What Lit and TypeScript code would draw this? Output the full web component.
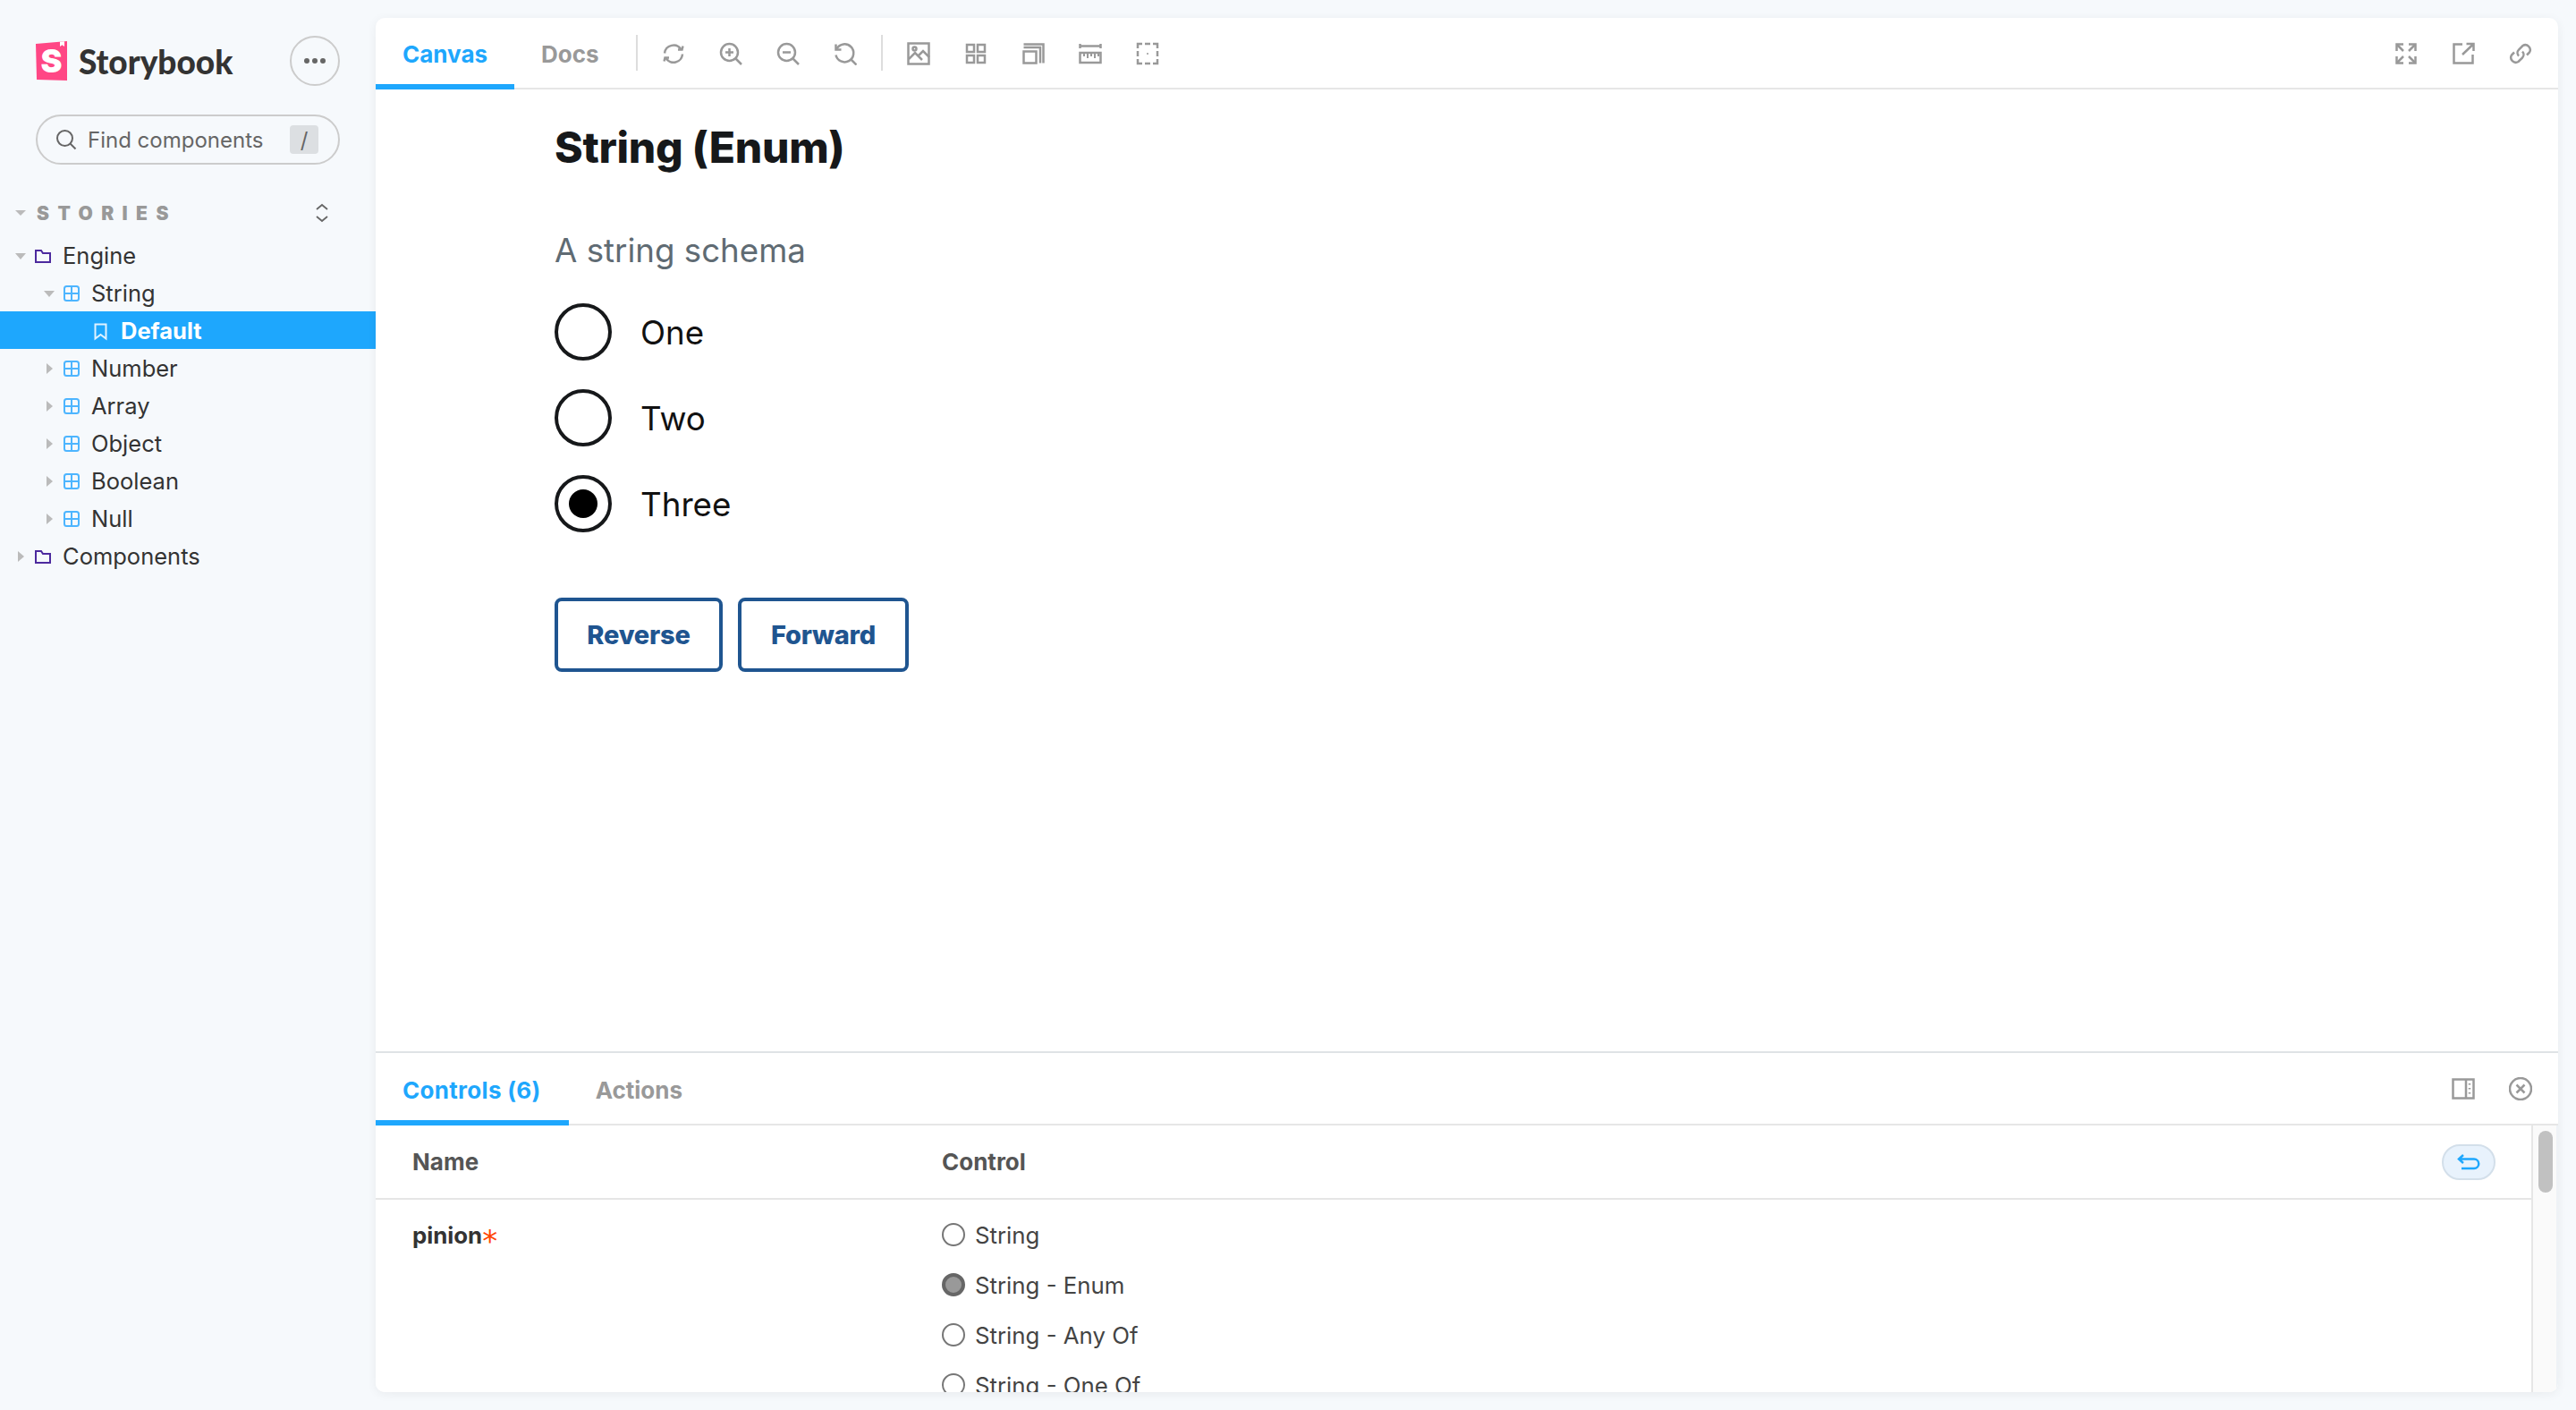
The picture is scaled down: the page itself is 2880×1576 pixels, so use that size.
import { LitElement, html, css, svg } from 'lit';
import { customElement } from 'lit/decorators.js';

// toolbar icons, all drawn on a 26x26 box
const ICONS: Record<string, unknown> = {
  sync: svg`<path d="M3 12.500a10 10 0 0 1 18.500-4M23 13.500a10 10 0 0 1-18.500 4.500"/><path d="M18 8.500h4.500l1-4M8 17.500H3.500l-1 4"/>`,
  zoomIn: svg`<circle cx="11.500" cy="11.500" r="9.500"/><path d="M18.500 18.500l6.500 6.500M11.500 7v9M7 11.500h9"/>`,
  zoomOut: svg`<circle cx="11.500" cy="11.500" r="9.500"/><path d="M18.500 18.500l6.500 6.500M7 11.500h9"/>`,
  reset: svg`<path d="M3.500 7.500a10 10 0 1 1-1 7"/><path d="M2.500 2.500v6h6"/><path d="M19 19l6.500 6.500"/>`,
  image: svg`<rect x="1.500" y="1.500" width="23" height="23"/><circle cx="8.500" cy="7.500" r="2"/><path d="M2 19l7-7 8 8M13 15l5-5 7 7"/>`,
  grid: svg`<path d="M3 3h8v8H3zM15 3h8v8h-8zM3 15h8v8H3zM15 15h8v8h-8z"/>`,
  outline: svg`<path d="M2.500 10.500h14v13h-14zM2.500 6h18.500v17.500M2.500 2.500H24.500v21"/>`,
  ruler: svg`<path d="M1.500 2v5M24.500 2v5M1.500 4.500h23"/><rect x="1.500" y="12" width="23" height="11"/><path d="M6 12v4M10 12v6M14 12v4M18 12v6M22 12v4" stroke-width="2"/>`,
  dashed: svg`<path d="M2 7V2h5M10 2h6M19 2h5v5M24 10v6M24 19v5h-5M16 24h-6M7 24H2v-5M2 16v-6"/><circle cx="13" cy="13" r="1" fill="#999" stroke="none"/>`,
  expand: svg`<path d="M3 3l7 7M23 3l-7 7M3 23l7-7M23 23l-7-7"/><path d="M2.500 10V2.500H10M16 2.500h7.500V10M2.500 16v7.500H10M16 23.500h7.500V16"/>`,
  external: svg`<path d="M12 2.500H2.500v21h21V14"/><path d="M12 14L24 2.500M16.500 2h8v8"/>`,
  link: svg`<path d="M11 15.500a5 5 0 0 1 0-7l4.500-4.500a5.500 5.500 0 0 1 7.500 7.500l-3 3"/><path d="M15 10.500a5 5 0 0 1 0 7l-4.500 4.500a5.500 5.500 0 0 1-7.500-7.500l3-3"/>`,
  panel: svg`<rect x="1.500" y="2.500" width="23" height="21"/><path d="M16 2.500v21M20 7v1.500M20 12v1.500M20 17v1.500"/>`,
  close: svg`<circle cx="13" cy="13" r="12"/><path d="M8.500 8.500l9 9M17.500 8.500l-9 9"/>`,
};

const icon = (name: string) =>
  html`<svg class="tool-icon" viewBox="0 0 26 26" fill="none" stroke="#999" stroke-width="2.500">${ICONS[name]}</svg>`;

const folderIcon = html`<svg class="node-icon" width="18" height="15" viewBox="0 0 18 15" fill="none" stroke="#4c2a9e" stroke-width="2"><path d="M1 1h6l2 3h8v10H1z"/></svg>`;
const componentIcon = html`<svg class="node-icon" width="18" height="18" viewBox="0 0 18 18" fill="none" stroke="#4db5ff" stroke-width="2"><rect x="1" y="1" width="16" height="16" rx="2.500"/><path d="M9 1v16M1 9h16"/></svg>`;
const storyIcon = html`<svg class="node-icon" width="15" height="20" viewBox="0 0 15 20" fill="none" stroke="#dff2ff" stroke-width="2"><path d="M1.500 1.500h12v16l-6-4.500-6 4.500z"/></svg>`;

type TreeNode = { label: string; kind: 'folder' | 'component' | 'story'; open?: boolean; selected?: boolean };

const TREE: TreeNode[] = [
  { label: 'Engine', kind: 'folder', open: true },
  { label: 'String', kind: 'component', open: true },
  { label: 'Default', kind: 'story', selected: true },
  { label: 'Number', kind: 'component' },
  { label: 'Array', kind: 'component' },
  { label: 'Object', kind: 'component' },
  { label: 'Boolean', kind: 'component' },
  { label: 'Null', kind: 'component' },
  { label: 'Components', kind: 'folder' },
];

const ENUM_OPTIONS = ['One', 'Two', 'Three'];
const CONTROL_OPTIONS = ['String', 'String - Enum', 'String - Any Of', 'String - One Of'];

@customElement('app-root')
export class AppRoot extends LitElement {
  static styles = css`
    :host {
      display: flex;
      width: 2880px;
      height: 1576px;
      overflow: hidden;
      background: #f6f9fc;
      font-family: 'Inter', 'Liberation Sans', sans-serif;
      color: #333;
    }

    /* sidebar */
    .sidebar {
      width: 420px;
      flex: none;
      padding-top: 40px;
      box-sizing: border-box;
    }
    .brand {
      display: flex;
      align-items: center;
      height: 56px;
      padding: 0 40px;
    }
    .logo {
      position: relative;
      width: 35px;
      height: 44px;
      display: flex;
      align-items: center;
      justify-content: center;
      background: #ff4785;
      clip-path: polygon(0 7%, 100% 0, 100% 100%, 3% 98%);
      color: #fff;
      font-size: 36px;
      font-weight: 900;
    }
    .logo::after {
      content: '';
      position: absolute;
      top: 0;
      right: 3px;
      width: 5px;
      height: 6px;
      background: #fff;
      clip-path: polygon(0 0, 100% 0, 100% 100%, 50% 70%, 0 100%);
    }
    .brand-name {
      margin-left: 13px;
      font-family: 'Lato', sans-serif;
      font-size: 37px;
      font-weight: 900;
      color: #333;
      flex: 1;
    }
    .menu {
      width: 56px;
      height: 56px;
      box-sizing: border-box;
      border: 2px solid #ccc;
      border-radius: 50%;
      display: flex;
      align-items: center;
      justify-content: center;
      gap: 3px;
    }
    .menu i {
      width: 6px;
      height: 6px;
      border-radius: 50%;
      background: #666;
    }
    .search {
      display: flex;
      align-items: center;
      height: 56px;
      box-sizing: border-box;
      margin: 32px 40px 0;
      padding: 0 22px 0 20px;
      border: 2px solid #ccc;
      border-radius: 28px;
      color: #666;
      font-size: 24px;
    }
    .search svg {
      flex: none;
      margin-right: 12px;
    }
    .search span {
      flex: 1;
    }
    .search kbd {
      width: 32px;
      height: 32px;
      display: flex;
      align-items: center;
      justify-content: center;
      border-radius: 4px;
      background: #dcdfe2;
      font-family: inherit;
      font-size: 24px;
      color: #666;
    }
    .stories {
      display: flex;
      align-items: center;
      height: 40px;
      margin-top: 34px;
      padding: 0 53px 0 17px;
      color: #999;
      font-size: 21px;
      font-weight: 900;
      letter-spacing: 9.400px;
    }
    .stories .label {
      flex: 1;
      margin-left: 12px;
    }
    .tree {
      margin-top: 6px;
    }
    .row {
      display: flex;
      align-items: center;
      height: 42px;
      font-size: 25.500px;
      color: #333;
    }
    .row.depth-0 { padding-left: 17px; }
    .row.depth-1 { padding-left: 49px; }
    .row.depth-2 { padding-left: 105px; }
    .row.selected {
      background: #1ea7fd;
      color: #fff;
      font-weight: 700;
    }
    .caret {
      width: 12px;
      flex: none;
      display: flex;
      justify-content: center;
      margin-right: 10px;
      padding-top: 2px;
    }
    .caret svg { display: block; }
    .node-icon {
      flex: none;
      margin: 2px 13px 0 0;
    }
    .row.depth-2 .node-icon { margin: 3px 15px 0 0; }

    /* main card */
    .main {
      flex: 1;
      display: flex;
      flex-direction: column;
      min-width: 0;
      margin: 20px 20px 20px 0;
      background: #fff;
      border-radius: 10px;
      overflow: hidden;
      box-shadow: 0 2px 12px rgba(0, 0, 0, 0.06);
    }
    .bar {
      display: flex;
      align-items: center;
      flex: none;
      height: 80px;
      box-sizing: border-box;
      border-bottom: 2px solid #e6e6e6;
    }
    .tab {
      align-self: stretch;
      display: flex;
      align-items: center;
      margin-bottom: -2px;
      padding: 6px 30px 0;
      box-sizing: border-box;
      border-bottom: 6px solid transparent;
      font-size: 26px;
      font-weight: 700;
      color: #999;
    }
    .tab.active {
      color: #1ea7fd;
      border-bottom-color: #1ea7fd;
    }
    .sep {
      width: 2px;
      height: 40px;
      margin: 0 8px;
      background: #ddd;
    }
    .sep.first {
      margin-left: 11px;
    }
    .tool {
      width: 64px;
      display: flex;
      justify-content: center;
      padding-top: 2px;
    }
    .tool-icon {
      width: 26px;
      height: 26px;
      display: block;
    }
    .spacer {
      flex: 1;
    }
    .bar .end {
      display: flex;
      margin-right: 10px;
    }

    /* story canvas */
    .canvas {
      flex: 1;
      min-height: 0;
      padding-left: 200px;
      color: #111;
    }
    h1 {
      margin: 35px 0 0;
      height: 60px;
      line-height: 60px;
      font-size: 48px;
      font-weight: 800;
      letter-spacing: -0.300px;
      color: #16181a;
    }
    .desc {
      margin: 60px 0 18px;
      height: 50px;
      line-height: 50px;
      font-size: 36.700px;
      color: #5f6b73;
    }
    .choice {
      display: flex;
      align-items: center;
      height: 96px;
      font-size: 36.700px;
    }
    .circle {
      width: 64px;
      height: 64px;
      box-sizing: border-box;
      margin-right: 32px;
      border: 4px solid #16181a;
      border-radius: 50%;
      display: flex;
      align-items: center;
      justify-content: center;
    }
    .circle i {
      width: 32px;
      height: 32px;
      border-radius: 50%;
      background: #000;
    }
    .buttons {
      display: flex;
      gap: 17px;
      margin-top: 57px;
    }
    button {
      height: 83px;
      box-sizing: border-box;
      padding: 0;
      border: 4px solid #1f5590;
      border-radius: 8px;
      background: #fff;
      color: #1f5590;
      font-family: inherit;
      font-size: 29px;
      font-weight: 800;
      letter-spacing: -0.200px;
    }
    button.reverse { width: 188px; }
    button.forward { width: 191px; }

    /* addon panel */
    .panel {
      flex: none;
      height: 381px;
      display: flex;
      flex-direction: column;
      box-sizing: border-box;
      border-top: 2px solid #dfe3e6;
    }
    .panel .bar {
      height: 81px;
    }
    .panel .tab {
      padding: 8px 31px 0 30px;
    }
    .panel .tab.active {
      letter-spacing: 0.300px;
    }
    .panel .tool {
      padding-top: 0;
    }
    .panel-body {
      flex: 1;
      min-height: 0;
      display: flex;
      background: #fff;
    }
    .table {
      flex: 1;
      min-width: 0;
      overflow: hidden;
    }
    .thead {
      display: grid;
      grid-template-columns: 592px 1fr auto;
      align-items: center;
      height: 81px;
      padding: 0 40px 0 41px;
      border-bottom: 2px solid #e6e6e6;
      font-size: 26px;
      font-weight: 700;
      color: #555;
    }
    .undo {
      width: 60px;
      height: 40px;
      box-sizing: border-box;
      border: 2px solid #d3dfea;
      border-radius: 20px;
      background: #e8f2fc;
      display: flex;
      align-items: center;
      justify-content: center;
    }
    .tbody {
      display: grid;
      grid-template-columns: 592px 1fr;
      padding: 11px 40px 0 41px;
      font-size: 25.800px;
    }
    .prop {
      height: 56px;
      line-height: 58px;
      font-weight: 700;
    }
    .prop span {
      font-family: 'DejaVu Sans', sans-serif;
      font-size: 34px;
      font-weight: 400;
      line-height: 0;
      color: #ff4400;
      vertical-align: -9px;
    }
    .option {
      display: flex;
      align-items: center;
      height: 56px;
      color: #444;
    }
    .dot {
      width: 26px;
      height: 26px;
      box-sizing: border-box;
      margin-right: 11px;
      border: 2px solid #767676;
      border-radius: 50%;
    }
    .dot.on {
      border: 4px solid #666;
      background: #999;
    }
    .scroll {
      flex: none;
      width: 28px;
      box-sizing: border-box;
      padding: 6px 4px 0 6px;
      border-left: 2px solid #e6e6e6;
      background: #fafafa;
    }
    .scroll i {
      display: block;
      height: 69px;
      border-radius: 8px;
      background: #c1c1c1;
    }
    .edge {
      flex: none;
      width: 2px;
      background: #eef2f6;
    }
  `;

  private renderRow(node: TreeNode) {
    const depth = node.kind === 'folder' ? 0 : node.kind === 'component' ? 1 : 2;
    const caret = node.open
      ? html`<svg width="12" height="7" viewBox="0 0 12 7" fill="#bbb"><path d="M0 0h12L6 7z"/></svg>`
      : html`<svg width="7" height="12" viewBox="0 0 7 12" fill="#bbb"><path d="M0 0l7 6-7 6z"/></svg>`;
    const nodeIcon =
      node.kind === 'folder' ? folderIcon : node.kind === 'component' ? componentIcon : storyIcon;
    return html`
      <div class="row depth-${depth} ${node.selected ? 'selected' : ''}">
        ${node.kind === 'story' ? '' : html`<span class="caret">${caret}</span>`}
        ${nodeIcon}
        <span>${node.label}</span>
      </div>
    `;
  }

  render() {
    return html`
      <aside class="sidebar">
        <div class="brand">
          <div class="logo">S</div>
          <div class="brand-name">Storybook</div>
          <div class="menu"><i></i><i></i><i></i></div>
        </div>
        <div class="search">
          <svg width="24" height="24" viewBox="0 0 24 24" fill="none" stroke="#666" stroke-width="2"><circle cx="10.500" cy="10.500" r="8.500"/><path d="M16.500 16.500l6 6"/></svg>
          <span>Find components</span>
          <kbd>/</kbd>
        </div>
        <div class="stories">
          <svg width="12" height="6" viewBox="0 0 12 6" fill="#bbb"><path d="M0 0h12L6 6z"/></svg>
          <span class="label">STORIES</span>
          <svg width="14" height="22" viewBox="0 0 14 22" fill="none" stroke="#666" stroke-width="1.800"><path d="M1 7l6-5 6 5M1 15l6 5 6-5"/></svg>
        </div>
        <div class="tree">${TREE.map((node) => this.renderRow(node))}</div>
      </aside>

      <div class="main">
        <div class="bar">
          <div class="tab active">Canvas</div>
          <div class="tab">Docs</div>
          <div class="sep first"></div>
          ${['sync', 'zoomIn', 'zoomOut', 'reset'].map((n) => html`<div class="tool">${icon(n)}</div>`)}
          <div class="sep"></div>
          ${['image', 'grid', 'outline', 'ruler', 'dashed'].map((n) => html`<div class="tool">${icon(n)}</div>`)}
          <div class="spacer"></div>
          <div class="end">
            ${['expand', 'external', 'link'].map((n) => html`<div class="tool">${icon(n)}</div>`)}
          </div>
        </div>

        <div class="canvas">
          <h1>String (Enum)</h1>
          <div class="desc">A string schema</div>
          ${ENUM_OPTIONS.map(
            (label) => html`
              <div class="choice">
                <div class="circle">${label === 'Three' ? html`<i></i>` : ''}</div>
                <span>${label}</span>
              </div>
            `,
          )}
          <div class="buttons">
            <button class="reverse">Reverse</button>
            <button class="forward">Forward</button>
          </div>
        </div>

        <div class="panel">
          <div class="bar">
            <div class="tab active">Controls (6)</div>
            <div class="tab">Actions</div>
            <div class="spacer"></div>
            <div class="end">
              ${['panel', 'close'].map((n) => html`<div class="tool">${icon(n)}</div>`)}
            </div>
          </div>
          <div class="panel-body">
            <div class="table">
              <div class="thead">
                <span>Name</span>
                <span>Control</span>
                <div class="undo">
                  <svg width="26" height="18" viewBox="0 0 26 18" fill="none" stroke="#1ea7fd" stroke-width="2.500"><path d="M7 1L2 5.500 7 10M2 5.500h17a5 5 0 0 1 0 10.500H5"/></svg>
                </div>
              </div>
              <div class="tbody">
                <div class="prop">pinion<span>*</span></div>
                <div>
                  ${CONTROL_OPTIONS.map(
                    (label) => html`
                      <div class="option">
                        <div class="dot ${label === 'String - Enum' ? 'on' : ''}"></div>
                        <span>${label}</span>
                      </div>
                    `,
                  )}
                </div>
              </div>
            </div>
            <div class="scroll"><i></i></div>
            <div class="edge"></div>
          </div>
        </div>
      </div>
    `;
  }
}
